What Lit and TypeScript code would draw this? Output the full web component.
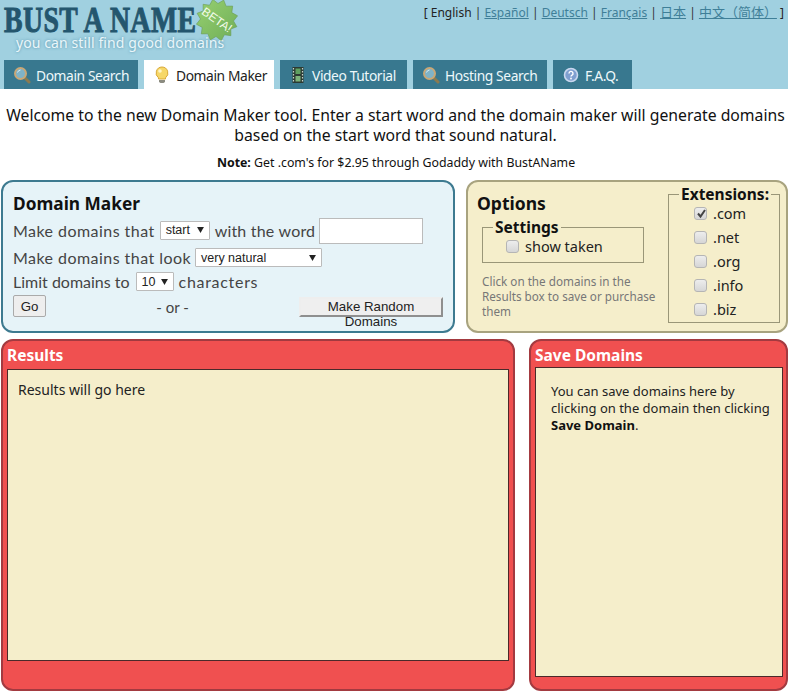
import { LitElement, html, css } from "lit";
import { customElement } from "lit/decorators.js";

const lens = html`<svg class="ico" viewBox="0 0 18 18"><path d="M11 11l5 5" stroke="#8a7a50" stroke-width="3" stroke-linecap="round"/><circle cx="7.5" cy="7.5" r="5.5" fill="#7fb3c8" stroke="#c9a877" stroke-width="2"/><path d="M4.5 6.5a3.5 3.5 0 0 1 3-2.5" stroke="#dceef4" fill="none"/></svg>`;
const bulb = html`<svg class="ico" viewBox="0 0 18 18"><path d="M9 1a6 6 0 0 0-3.5 10.8V13h7v-1.200A6 6 0 0 0 9 1z" fill="#f6d768" stroke="#d9a93a"/><path d="M6 14h6v2l-1.500 1h-3L6 16z" fill="#8b8b80"/><circle cx="7" cy="5" r="1.800" fill="#fff6c8"/></svg>`;
const film = html`<svg class="ico" viewBox="0 0 18 18"><rect x="3.500" y="1" width="11" height="16" fill="#2c3a32"/><rect x="6.500" y="2.500" width="5" height="5.500" fill="#5fa060"/><rect x="6.500" y="10" width="5" height="5.500" fill="#7db37a"/><path d="M4.500 2v14M13.500 2v14" stroke="#c9d4c8" stroke-width="1.200" stroke-dasharray="1.500 1.500"/></svg>`;
const help = html`<svg class="ico" viewBox="0 0 18 18"><circle cx="9" cy="9" r="6.500" fill="#7f9fd0" stroke="#c9d8ef" stroke-width="1.600"/><path d="M7 7.400a2 2 0 1 1 3 1.700c-.7.400-1 .8-1 1.500" fill="none" stroke="#fff" stroke-width="1.400"/><circle cx="9" cy="12.500" r=".9" fill="#fff"/></svg>`;
const arrow = html`<svg class="arrow" viewBox="0 0 8 7"><path d="M0 0h8L4 7z" fill="#222"/></svg>`;

const STAR: string = (() => {
  const pts: string[] = [];
  const n = 12;
  for (let i = 0; i < n * 2; i++) {
    const r = i % 2 ? 16.5 : 21;
    const a = (Math.PI * i) / n - 0.2;
    pts.push(`${(21 + r * Math.cos(a)).toFixed(1)},${(21 + r * Math.sin(a)).toFixed(1)}`);
  }
  return pts.join(" ");
})();

@customElement("app-root")
export class AppRoot extends LitElement {
  static styles = css`
    :host { display: block; width: 788px; height: 693px; overflow: hidden; background: #fff; color: #111; font-family: "Noto Sans", Tahoma, sans-serif; }
    a { color: #3f7f98; text-decoration: underline; }
    .head { height: 89px; background: #a0d0e0; display: flex; flex-direction: column; justify-content: flex-end; position: relative; }
    .top { flex: 1; display: flex; justify-content: space-between; }
    .logo { position: relative; width: 240px; padding: 4px 0 0 4px; box-sizing: border-box; }
    .brand { font-family: "Liberation Serif", serif; font-weight: 700; font-size: 36px; line-height: 32px; letter-spacing: 0.6px; color: #24566e; -webkit-text-stroke: 1px #24566e; transform: scaleX(0.77); transform-origin: left top; white-space: nowrap; margin: 0; }
    .tag { margin: 0 0 0 12px; font-size: 14px; letter-spacing: 0.1px; line-height: 14px; color: #eaf6fa; text-shadow: 0 0 3px #4f8fa8; white-space: nowrap; }
    .badge { position: absolute; left: 196px; top: -1px; width: 42px; height: 42px; }
    .badge svg { width: 42px; height: 42px; display: block; }
    .beta { position: absolute; left: 0; top: 12px; width: 42px; text-align: center; font-size: 12px; line-height: 18px; color: #f2fbe8; transform: rotate(35deg); font-family: "Liberation Sans", sans-serif; }
    .langs { font-size: 12px; line-height: 18px; padding: 3px 4px 0 0; color: #222; white-space: nowrap; font-family: "Noto Sans", "Noto Sans CJK SC", sans-serif; }
    .langs .sep { color: #333; }
    .langs .cjk { font-size: 13px; }
    .tabs { display: flex; gap: 6px; padding-left: 4px; height: 29px; }
    .tab { background: #38788f; color: #eef8fb; display: flex; align-items: center; gap: 5px; padding: 1px 9px 0; font-size: 13.800px; letter-spacing: -0.400px; box-sizing: border-box; white-space: nowrap; }
    .tab.on { background: #fff; color: #222; }
    .ico { width: 18px; height: 18px; flex: none; }
    .intro { text-align: center; font-size: 15.750px; line-height: 20px; padding: 16px 0 0 3px; margin: 0; color: #111; }
    .note { text-align: center; font-size: 12.350px; line-height: 16px; margin: 10px 0 0; padding-left: 4px; }
    main { padding-left: 1px; margin-top: 9px; display: flex; flex-direction: column; gap: 6px; }
    .row { display: flex; }
    .maker { width: 454px; height: 153px; box-sizing: border-box; border: 2px solid #3d7a90; border-radius: 12px; background: #e6f3f8; padding: 9px 10px 0; margin-right: 11px; }
    h2 { margin: 0; font-size: 17.300px; line-height: 26px; font-weight: 700; color: #111; }
    .maker h2 { height: 26px; }
    .line { display: flex; align-items: center; gap: 4px; font-family: Lato, sans-serif; font-size: 16px; letter-spacing: 0.450px; color: #444; height: 21px; margin-top: 3px; white-space: nowrap; }
    .line.first { height: 26px; margin-top: 0; margin-bottom: 4px; }
    .line.first .sel { margin-left: 1px; }
    .word { letter-spacing: 0.2px; margin-left: 1px; }
    .tight { letter-spacing: 0; margin-right: 2px; }
    .wide { letter-spacing: 0.7px; margin-left: 1px; }
    .sel { display: inline-flex; align-items: center; justify-content: space-between; height: 19px; box-sizing: border-box; border: 1px solid #bbb; background: #fff; padding: 0 5px; font: 12.500px "Liberation Sans", sans-serif; letter-spacing: 0; color: #222; border-radius: 1px; }
    .arrow { width: 7px; height: 6px; }
    .txt { width: 104px; height: 26px; box-sizing: border-box; border: 1px solid #bbb; background: #fff; padding: 0 3px; margin: 2px 0 0; outline: none; }
    .acts { display: flex; align-items: flex-start; justify-content: space-between; margin-top: 3px; height: 22px; font-family: Lato, sans-serif; color: #444; font-size: 15px; }
    button { font: 13.300px "Liberation Sans", sans-serif; color: #222; padding: 0; margin: 0; }
    .go { width: 33px; height: 22px; background: #eee; border: 1px solid #aaa; border-radius: 2px; }
    .or { line-height: 24px; width: 33px; text-align: center; white-space: nowrap; }
    .rand { width: 144px; height: 20px; background: #efefef; border: 2px solid; border-color: #eee #8f8f8f #8f8f8f #eee; line-height: 15px; overflow: visible; display: block; margin-top: 2px; align-self: flex-start; }
    .rand span { display: block; width: 100px; margin: 0 auto; text-align: center; }
    .opts { width: 322px; height: 153px; box-sizing: border-box; border: 2px solid #a8a37f; border-radius: 12px; background: #f5eecb; display: flex; padding: 0 6px 0 9px; justify-content: space-between; }
    .optl { width: 162px; padding-top: 8px; }
    .optl h2 { font-size: 17.500px; line-height: 26px; margin-left: 0; }
    fieldset { margin: 0; border: 1px solid #9a9678; padding: 0; box-sizing: border-box; min-width: 0; }
    legend { font-weight: 700; font-size: 15.500px; line-height: 16px; color: #111; padding: 0 2px; }
    .set { margin: 3px 0 0 5px; height: 44px; width: 162px; }
    .set legend { margin-left: 10px; }
    .cb { display: flex; align-items: center; gap: 6px; font-size: 14.500px; line-height: 24px; color: #222; }
    .set .cb { padding-left: 23px; line-height: 20px; margin-top: 1px; }
    .box { width: 13px; height: 13px; box-sizing: border-box; border: 1px solid #b5b5b5; border-radius: 3px; background: linear-gradient(#ededed, #d6d6d6); display: block; flex: none; position: relative; }
    .box svg { position: absolute; left: 1px; top: 0; width: 11px; height: 11px; }
    .hint { margin: 11px 0 0 5px; font-size: 11.700px; line-height: 15px; color: #777; width: 176px; }
    .ext { width: 112px; height: 137px; margin-top: 4px; }
    .ext legend { margin-left: 10px; }
    .ext .list { padding: 0 0 0 25px; display: flex; flex-direction: column; gap: 2px; }
    .ext .cb { line-height: 22px; }
    .red { box-sizing: border-box; height: 352px; border: 2px solid #a33a40; border-radius: 12px; background: #f05050; padding: 0 4px; display: flex; flex-direction: column; }
    .red h3 { margin: 0; font-size: 15.500px; line-height: 28px; height: 28px; color: #fff; font-weight: 700; }
    .well { box-sizing: border-box; border: 1px solid #4a2a2a; background: #f5eecb; line-height: 17px; color: #222; }
    .res { width: 514px; margin-right: 14px; }
    .res .well { height: 292px; padding: 11px 10px; font-size: 14px; }
    .sav { width: 259px; padding-right: 3px; }
    .sav h3 { height: 26px; }
    .sav .well { height: 310px; padding: 15px 6px 13px 15px; font-size: 13px; }
    .well p { margin: 0; }
    b { color: #111; }
  `;

  tab(label: string, icon: unknown, w: number, on = false) {
    return html`<div class="tab ${on ? "on" : ""}" style="width:${w}px">${icon}<span>${label}</span></div>`;
  }

  cb(label: string, checked = false) {
    return html`<label class="cb"><span class="box">${checked ? html`<svg viewBox="0 0 11 11"><path d="M2 5.500l2.500 3L9 2" fill="none" stroke="#444" stroke-width="2"/></svg>` : ""}</span>${label}</label>`;
  }

  render() {
    return html`
      <header class="head">
        <div class="top">
          <div class="logo">
            <p class="brand">BUST A NAME</p>
            <p class="tag">you can still find good domains</p>
            <div class="badge">
              <svg viewBox="0 0 42 42">
                <defs><linearGradient id="g" x1="0" y1="0" x2="1" y2="1"><stop offset="0" stop-color="#97d070"/><stop offset="1" stop-color="#6fae58"/></linearGradient></defs>
                <polygon points=${STAR} fill="url(#g)" stroke="#6a9a58" stroke-width=".6"/>
              </svg>
              <div class="beta">BETA!</div>
            </div>
          </div>
          <div class="langs">[ English <span class="sep">|</span> <a>Español</a> <span class="sep">|</span> <a>Deutsch</a> <span class="sep">|</span> <a>Français</a> <span class="sep">|</span> <a class="cjk">日本</a> <span class="sep">|</span> <a class="cjk">中文（简体）</a> ]</div>
        </div>
        <nav class="tabs">
          ${this.tab("Domain Search", lens, 134)}
          ${this.tab("Domain Maker", bulb, 130, true)}
          ${this.tab("Video Tutorial", film, 127)}
          ${this.tab("Hosting Search", lens, 134)}
          ${this.tab("F.A.Q.", help, 79)}
        </nav>
      </header>
      <p class="intro">Welcome to the new Domain Maker tool. Enter a start word and the domain maker will generate domains based on the start word that sound natural.</p>
      <p class="note"><b>Note:</b> Get .com's for $2.95 through Godaddy with BustAName</p>
      <main>
        <div class="row">
          <section class="maker">
            <h2>Domain Maker</h2>
            <div class="line first">Make domains that <span class="sel" style="width:50px">start ${arrow}</span> <span class="word">with the word</span> <input class="txt" /></div>
            <div class="line">Make domains that look <span class="sel" style="width:127px">very natural ${arrow}</span></div>
            <div class="line"><span class="tight">Limit domains to</span> <span class="sel" style="width:38px">10 ${arrow}</span> <span class="wide">characters</span></div>
            <div class="acts">
              <button class="go">Go</button>
              <span class="or">- or -</span>
              <button class="rand"><span>Make Random Domains</span></button>
            </div>
          </section>
          <section class="opts">
            <div class="optl">
              <h2>Options</h2>
              <fieldset class="set"><legend>Settings</legend>${this.cb("show taken")}</fieldset>
              <p class="hint">Click on the domains in the Results box to save or purchase them</p>
            </div>
            <fieldset class="ext"><legend>Extensions:</legend>
              <div class="list">${this.cb(".com", true)}${this.cb(".net")}${this.cb(".org")}${this.cb(".info")}${this.cb(".biz")}</div>
            </fieldset>
          </section>
        </div>
        <div class="row">
          <section class="red res"><h3>Results</h3><div class="well"><p>Results will go here</p></div></section>
          <section class="red sav"><h3>Save Domains</h3><div class="well"><p>You can save domains here by clicking on the domain then clicking <b>Save Domain</b>.</p></div></section>
        </div>
      </main>
    `;
  }
}
